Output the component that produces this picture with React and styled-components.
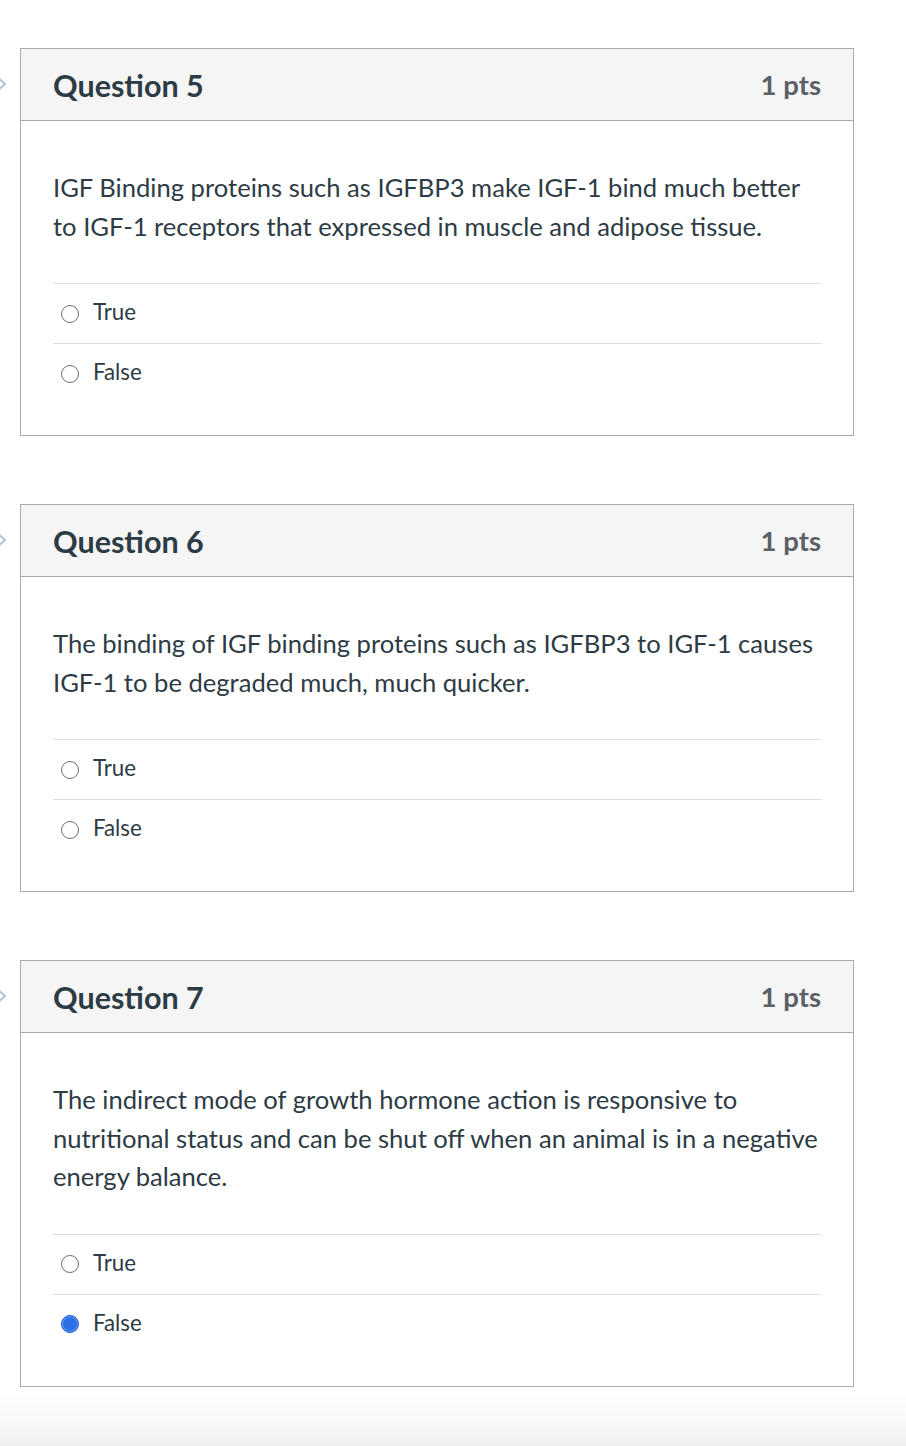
import React from 'react';
import styled, { createGlobalStyle } from 'styled-components';

const GlobalStyle = createGlobalStyle`
  html, body {
    margin: 0;
    padding: 0;
    background: #ffffff;
  }
  body {
    font-family: Lato, "Open Sans", sans-serif;
    color: #2d3b45;
  }
`;

const questions = [
  {
    id: 5,
    points: 1,
    text: 'IGF Binding proteins such as IGFBP3 make IGF-1 bind much better to IGF-1 receptors that expressed in muscle and adipose tissue.',
    selected: null,
  },
  {
    id: 6,
    points: 1,
    text: 'The binding of IGF binding proteins such as IGFBP3 to IGF-1 causes IGF-1 to be degraded much, much quicker.',
    selected: null,
  },
  {
    id: 7,
    points: 1,
    text: 'The indirect mode of growth hormone action is responsive to nutritional status and can be shut off when an animal is in a negative energy balance.',
    selected: 'False',
  },
];

const Page = styled.div`
  width: 906px;
  min-height: 1446px;
  padding-top: 48px;
  box-sizing: border-box;
  display: flex;
  flex-direction: column;
  gap: 68px;
`;

const QuestionRow = styled.div`
  display: flex;
  align-items: flex-start;
`;

const Gutter = styled.div`
  width: 20px;
  flex-shrink: 0;
  padding-top: 28px;
  svg {
    display: block;
    margin-left: -6px;
  }
`;

const Card = styled.div`
  width: 834px;
  box-sizing: border-box;
  border: 1px solid #a9acae;
  background: #fff;
`;

const Header = styled.div`
  height: 72px;
  box-sizing: border-box;
  background: #f5f5f5;
  border-bottom: 1px solid #a9acae;
  display: flex;
  align-items: center;
  justify-content: space-between;
  padding: 0 32px 0 32px;
`;

const Title = styled.h2`
  margin: 0;
  font-family: Lato, sans-serif;
  font-weight: 700;
  font-size: 30.5px;
  color: #2d3b45;
`;

const Points = styled.span`
  font-family: Lato, sans-serif;
  font-weight: 700;
  font-size: 27.5px;
  color: #5b6065;
`;

const Body = styled.div`
  padding: 47px 32px 32px 32px;
`;

const QuestionText = styled.p`
  margin: 0 0 38px 0;
  font-family: Lato, sans-serif;
  font-size: 25.6px;
  line-height: 38.5px;
  color: #2d3b45;
`;

const Answers = styled.div`
  display: flex;
  flex-direction: column;
`;

const Answer = styled.label`
  height: 60px;
  box-sizing: border-box;
  border-top: 1px solid #dcdedf;
  display: flex;
  align-items: center;
  padding: 0 0 4px 8px;
  gap: 14px;
  font-family: Lato, sans-serif;
  font-size: 22.3px;
  color: #2d3b45;
`;

const Radio = styled.span`
  width: 18px;
  height: 18px;
  box-sizing: border-box;
  border-radius: 50%;
  border: ${p => (p.$checked ? '1.5px solid #1d5ed8' : '1.5px solid #6b6f72')};
  background: ${p => (p.$checked ? '#2f6fe6' : '#fff')};
  box-shadow: ${p => (p.$checked ? 'inset 0 0 0 1px #6d9cf0' : 'none')};
  flex-shrink: 0;
  margin-top: 4px;
`;

const Fade = styled.div`
  height: 60px;
  margin-top: -68px;
  background: linear-gradient(to bottom, #ffffff 0%, #f9f9f9 55%, #efefef 100%);
`;

const Chevron = () => (
  <svg width="14" height="16" viewBox="0 0 14 16">
    <path d="M3 1 L11 8 L3 15" fill="none" stroke="#b7c3cf" strokeWidth="2.2" strokeLinejoin="round" />
  </svg>
);

const QuestionCard = ({ q }) => (
  <QuestionRow>
    <Gutter>
      <Chevron />
    </Gutter>
    <Card>
      <Header>
        <Title>Question {q.id}</Title>
        <Points>{q.points} pts</Points>
      </Header>
      <Body>
        <QuestionText>{q.text}</QuestionText>
        <Answers>
          {['True', 'False'].map(opt => (
            <Answer key={opt}>
              <Radio $checked={q.selected === opt} />
              {opt}
            </Answer>
          ))}
        </Answers>
      </Body>
    </Card>
  </QuestionRow>
);

const App = () => (
  <>
    <GlobalStyle />
    <Page>
      {questions.map(q => (
        <QuestionCard key={q.id} q={q} />
      ))}
      <Fade />
    </Page>
  </>
);

export default App;
